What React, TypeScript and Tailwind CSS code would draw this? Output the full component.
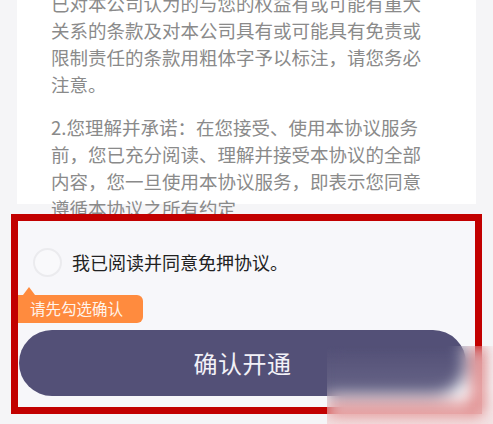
const paragraphs = [
  [
    "已对本公司认为的与您的权益有或可能有重大",
    "关系的条款及对本公司具有或可能具有免责或",
    "限制责任的条款用粗体字予以标注，请您务必",
    "注意。",
  ],
  [
    "2.您理解并承诺：在您接受、使用本协议服务",
    "前，您已充分阅读、理解并接受本协议的全部",
    "内容，您一旦使用本协议服务，即表示您同意",
    "遵循本协议之所有约定",
  ],
];

export default function App() {
  return (
    <main
      className="relative h-[424px] w-[493px] overflow-hidden bg-[#f5f5f7]"
      style={{ fontFamily: '"Noto Sans CJK SC", "Noto Sans", sans-serif' }}
    >
      {/* agreement text, scrolled */}
      <div className="h-[214px] overflow-hidden">
        <div className="mx-[17px] h-full bg-white">
          <div className="-mt-[10px] flex flex-col gap-4 pl-[34px] text-[18.5px] leading-[27px] text-[#8a8a8a]">
            {paragraphs.map((lines, i) => (
              <p key={i} className="whitespace-nowrap">
                {lines.map((line, j) => (
                  <span key={j} className="block">
                    {line}
                  </span>
                ))}
              </p>
            ))}
          </div>
        </div>
      </div>

      {/* footer */}
      <div className="px-[11px] pb-[10px]">
        <div className="flex h-[200px] flex-col border-[7px] border-[#c20000] bg-[#f7f7fa]">
          <label className="mt-[27px] flex items-center pl-[15px]">
            <span className="h-[29px] w-[29px] rounded-full border-2 border-[#ebebee] bg-[#f9f9fb]" />
            <span className="ml-[10px] text-[18px] leading-[29px] text-[#222]">
              我已阅读并同意免押协议。
            </span>
          </label>

          <div className="relative mt-[18px] flex h-[28px] w-[125px] items-center rounded-r-md bg-[#ff8b3e] pl-3 text-[15.5px] text-[#fff4ec]">
            <span className="absolute -top-[8px] left-[5px] h-0 w-0 border-x-[6px] border-b-[8px] border-x-transparent border-b-[#ff8b3e]" />
            请先勾选确认
          </div>

          <button
            type="button"
            className="mt-[7px] ml-px mr-[9px] h-[66px] rounded-full bg-[#535077] text-[24px] tracking-[0.5px] text-[#f2f1f7]"
          >
            确认开通
          </button>
        </div>
      </div>

      {/* blurred watermark */}
      <div className="absolute right-0 bottom-0 h-[78px] w-[166px] bg-gradient-to-b from-white/0 via-white/10 to-[#f0c8c8]/40 backdrop-blur-[8px]" />
    </main>
  );
}
